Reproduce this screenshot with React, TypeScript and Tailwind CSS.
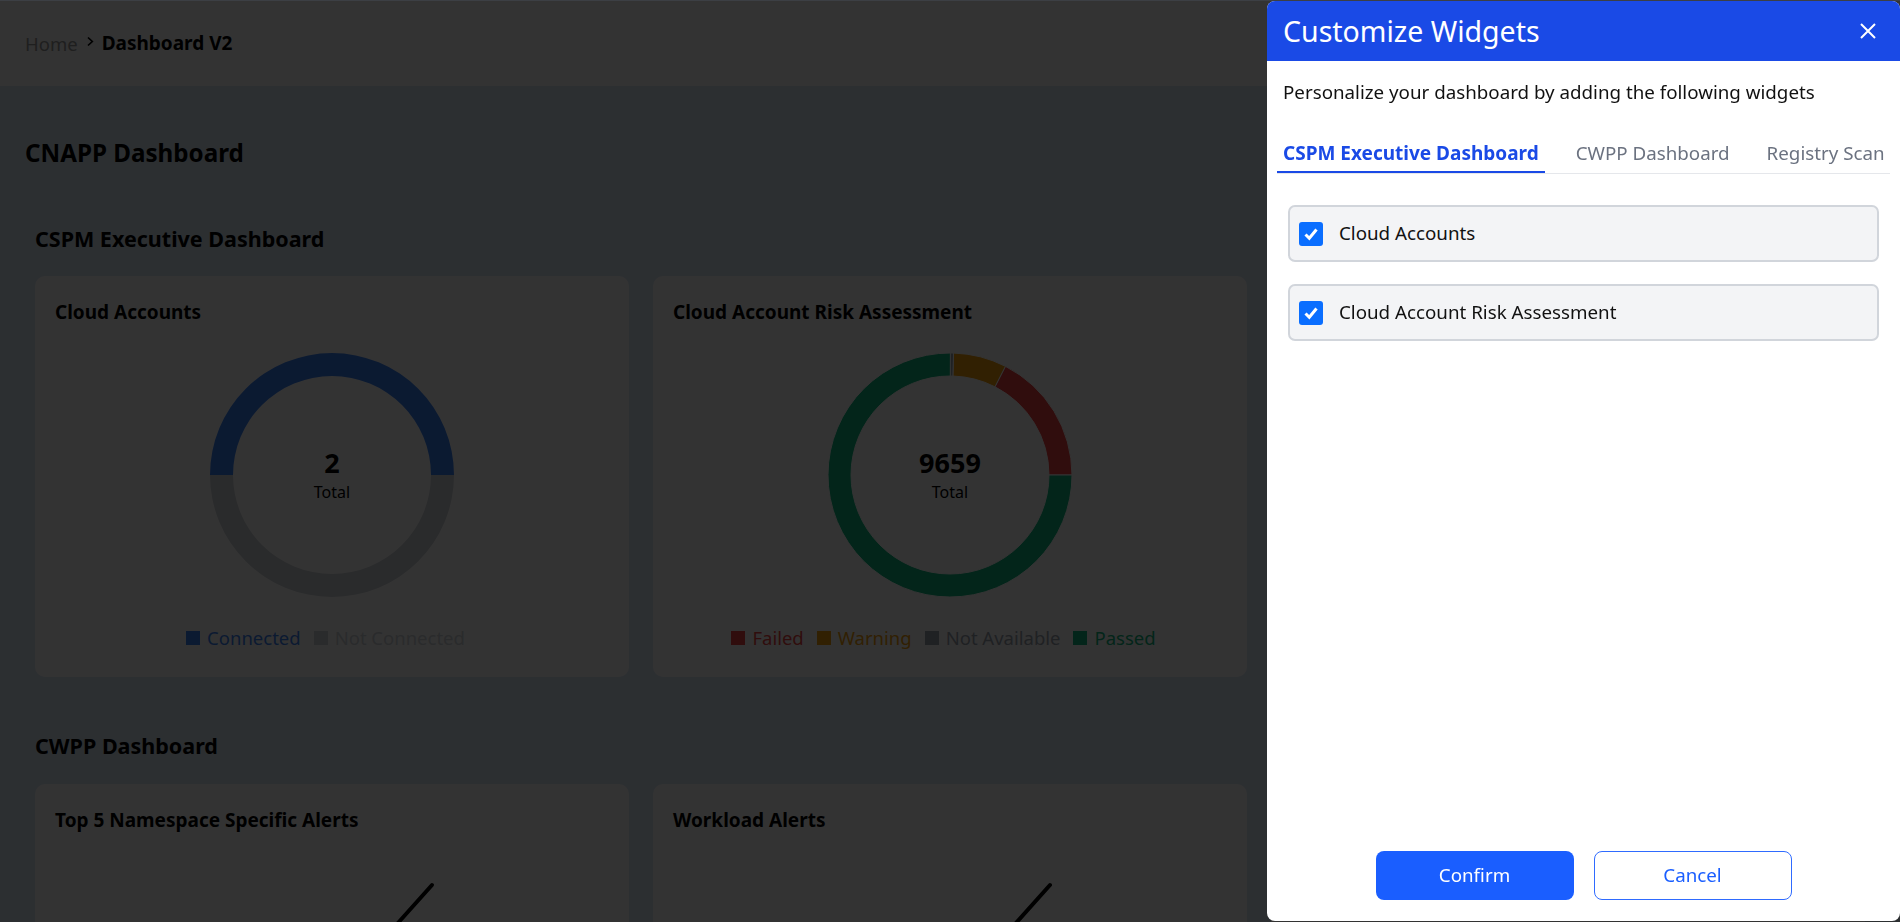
import React from "react";

type Seg = { label: string; value: number; color: string };

const cloudSegs: Seg[] = [
  { label: "Connected", value: 1, color: "#3b82f6" },
  { label: "Not Connected", value: 1, color: "#d1d5db" },
];

const riskSegs: Seg[] = [
  { label: "Failed", value: 1690, color: "#ef4444" },
  { label: "Warning", value: 680, color: "#f59e0b" },
  { label: "Not Available", value: 40, color: "#9ca3af" },
  { label: "Passed", value: 7249, color: "#10b981" },
];

// annular sector, angles counter-clockwise from 3 o'clock (like recharts)
function arc(a0: number, a1: number, R: number, r: number, c: number) {
  const p = (rad: number, a: number) => {
    const t = (a * Math.PI) / 180;
    return `${(c + rad * Math.cos(t)).toFixed(2)} ${(c - rad * Math.sin(t)).toFixed(2)}`;
  };
  const large = a1 - a0 > 180 ? 1 : 0;
  return `M ${p(R, a0)} A ${R} ${R} 0 ${large} 0 ${p(R, a1)} L ${p(r, a1)} A ${r} ${r} 0 ${large} 1 ${p(r, a0)} Z`;
}

function Donut({ segs, total, stroke }: { segs: Seg[]; total: string; stroke?: string }) {
  const sum = segs.reduce((s, x) => s + x.value, 0);
  let a = 0;
  return (
    <div className="relative w-[244px] h-[244px]">
      <svg width="244" height="244" viewBox="0 0 244 244">
        {segs.map((s) => {
          const a0 = a;
          const a1 = a + (360 * s.value) / sum;
          a = a1;
          return <path key={s.label} d={arc(a0, a1, 122, 99, 122)} fill={s.color} stroke={stroke || "none"} strokeWidth={1} />;
        })}
      </svg>
      <div className="absolute inset-0 flex flex-col items-center justify-center">
        <span className="text-[27px] leading-[34px] font-bold text-black">{total}</span>
        <span className="text-[16px] leading-[24px] text-black">Total</span>
      </div>
    </div>
  );
}

function Legend({ segs }: { segs: Seg[] }) {
  return (
    <div className="flex items-center justify-center gap-[13px] pr-[13px]">
      {segs.map((s) => (
        <div key={s.label} className="flex items-center gap-[7px]">
          <span className="w-[14px] h-[14px]" style={{ background: s.color }} />
          <span className="text-[18.5px] leading-[28px]" style={{ color: s.color }}>
            {s.label}
          </span>
        </div>
      ))}
    </div>
  );
}

function ChartCard({ title, segs, total, stroke }: { title: string; segs: Seg[]; total: string; stroke?: string }) {
  return (
    <div className="bg-white rounded-[10px] h-[401px] pt-[22px] px-[20px] flex flex-col">
      <h3 className="text-[19px] leading-[28px] font-bold text-black">{title}</h3>
      <div className="flex justify-center mt-[27px]">
        <Donut segs={segs} total={total} stroke={stroke} />
      </div>
      <div className="mt-[27px]">
        <Legend segs={segs} />
      </div>
    </div>
  );
}

function LineCard({ title }: { title: string }) {
  return (
    <div className="bg-white rounded-[10px] h-[300px] pt-[22px] flex flex-col">
      <h3 className="px-[20px] text-[19px] leading-[28px] font-bold text-black">{title}</h3>
      <svg width="594" height="140" viewBox="0 0 594 140">
        <line x1="397" y1="51" x2="345" y2="109" stroke="#000" strokeWidth="4" strokeLinecap="round" />
      </svg>
    </div>
  );
}

const widgets = ["Cloud Accounts", "Cloud Account Risk Assessment"];

export default function App() {
  return (
    <div className="min-h-screen bg-[#dce8f6] border-t border-[#3c3f44] font-['Noto_Sans',sans-serif] overflow-hidden">
      {/* top bar */}
      <div className="h-[85px] bg-white px-[25px] flex items-center">
        <span className="text-[18.5px] text-[#9a9a9a]">Home</span>
        <svg width="8" height="11" viewBox="0 0 8 11" className="mx-[8px] -mt-[5px]">
          <path d="M2 1.5 L6.3 5.5 L2 9.5" fill="none" stroke="#000" strokeWidth="1.7" />
        </svg>
        <span className="text-[19px] font-bold text-black">Dashboard V2</span>
      </div>

      <div className="px-[25px] pt-[50px]">
        <h1 className="text-[24.2px] leading-[34px] font-bold text-black">CNAPP Dashboard</h1>

        <section className="px-[10px] mt-[54px]">
          <h2 className="text-[21.5px] leading-[30px] font-bold text-black mb-[22px]">CSPM Executive Dashboard</h2>
          <div className="grid grid-cols-3 gap-[24px]">
            <ChartCard title="Cloud Accounts" segs={cloudSegs} total="2" />
            <ChartCard title="Cloud Account Risk Assessment" segs={riskSegs} total="9659" stroke="#fff" />
            <div className="bg-white rounded-[10px] h-[401px]" />
          </div>
        </section>

        <section className="px-[10px] mt-[54px]">
          <h2 className="text-[21.5px] leading-[30px] font-bold text-black mb-[23px]">CWPP Dashboard</h2>
          <div className="grid grid-cols-3 gap-[24px]">
            <LineCard title="Top 5 Namespace Specific Alerts" />
            <LineCard title="Workload Alerts" />
            <div className="bg-white rounded-[10px] h-[300px]" />
          </div>
        </section>
      </div>

      {/* overlay */}
      <div className="fixed inset-x-0 top-px bottom-0 bg-black/80" />

      {/* customize widgets drawer */}
      <aside className="fixed right-0 top-px bottom-px w-[633px] bg-white rounded-[8px] overflow-hidden flex flex-col">
        <div className="h-[60px] bg-[#1a4ae6] pl-[16px] pr-[24px] flex items-center justify-between">
          <h2 className="text-[28.5px] text-white">Customize Widgets</h2>
          <svg width="16" height="16" viewBox="0 0 16 16">
            <path d="M1 1 L15 15 M15 1 L1 15" stroke="#fff" strokeWidth="2" />
          </svg>
        </div>

        <p className="mt-[18px] px-[16px] text-[18.75px] leading-[26px] text-[#111]">
          Personalize your dashboard by adding the following widgets
        </p>

        <div className="mx-[10px] mt-[34px] flex gap-[25px] border-b border-[#e5e7eb] overflow-hidden whitespace-nowrap">
          <button className="shrink-0 px-[6px] pb-[4px] leading-[28px] text-[19px] font-bold text-[#1a4ae6] border-b-2 border-[#1a4ae6]">
            CSPM Executive Dashboard
          </button>
          <button className="shrink-0 px-[6px] pb-[6px] leading-[28px] text-[18.75px] text-[#6b7280]">CWPP Dashboard</button>
          <button className="shrink-0 px-[6px] pb-[6px] leading-[28px] text-[18.75px] text-[#6b7280]">Registry Scan</button>
        </div>

        <div className="px-[21px] mt-[31px] flex flex-col gap-[22px]">
          {widgets.map((w) => (
            <label key={w} className="h-[57px] border-2 border-[#d1d5db] rounded-[7px] bg-[#f3f4f6] px-[9px] flex items-center gap-[16px]">
              <span className="w-[24px] h-[24px] rounded-[3px] bg-[#0a6eff] flex items-center justify-center">
                <svg width="18" height="18" viewBox="0 0 18 18">
                  <path d="M3.5 9.5 L7.3 13.3 L14.5 4.5" fill="none" stroke="#fff" strokeWidth="3" />
                </svg>
              </span>
              <span className="text-[18.75px] text-[#111]">{w}</span>
            </label>
          ))}
        </div>

        <div className="mt-auto pb-[21px] flex justify-center gap-[20px]">
          <button className="w-[198px] h-[49px] rounded-[8px] bg-[#1a5eff] text-white text-[18.75px]">Confirm</button>
          <button className="w-[198px] h-[49px] rounded-[8px] border border-[#2f6bff] bg-white text-[#1a5eff] text-[18.75px]">
            Cancel
          </button>
        </div>
      </aside>
    </div>
  );
}
